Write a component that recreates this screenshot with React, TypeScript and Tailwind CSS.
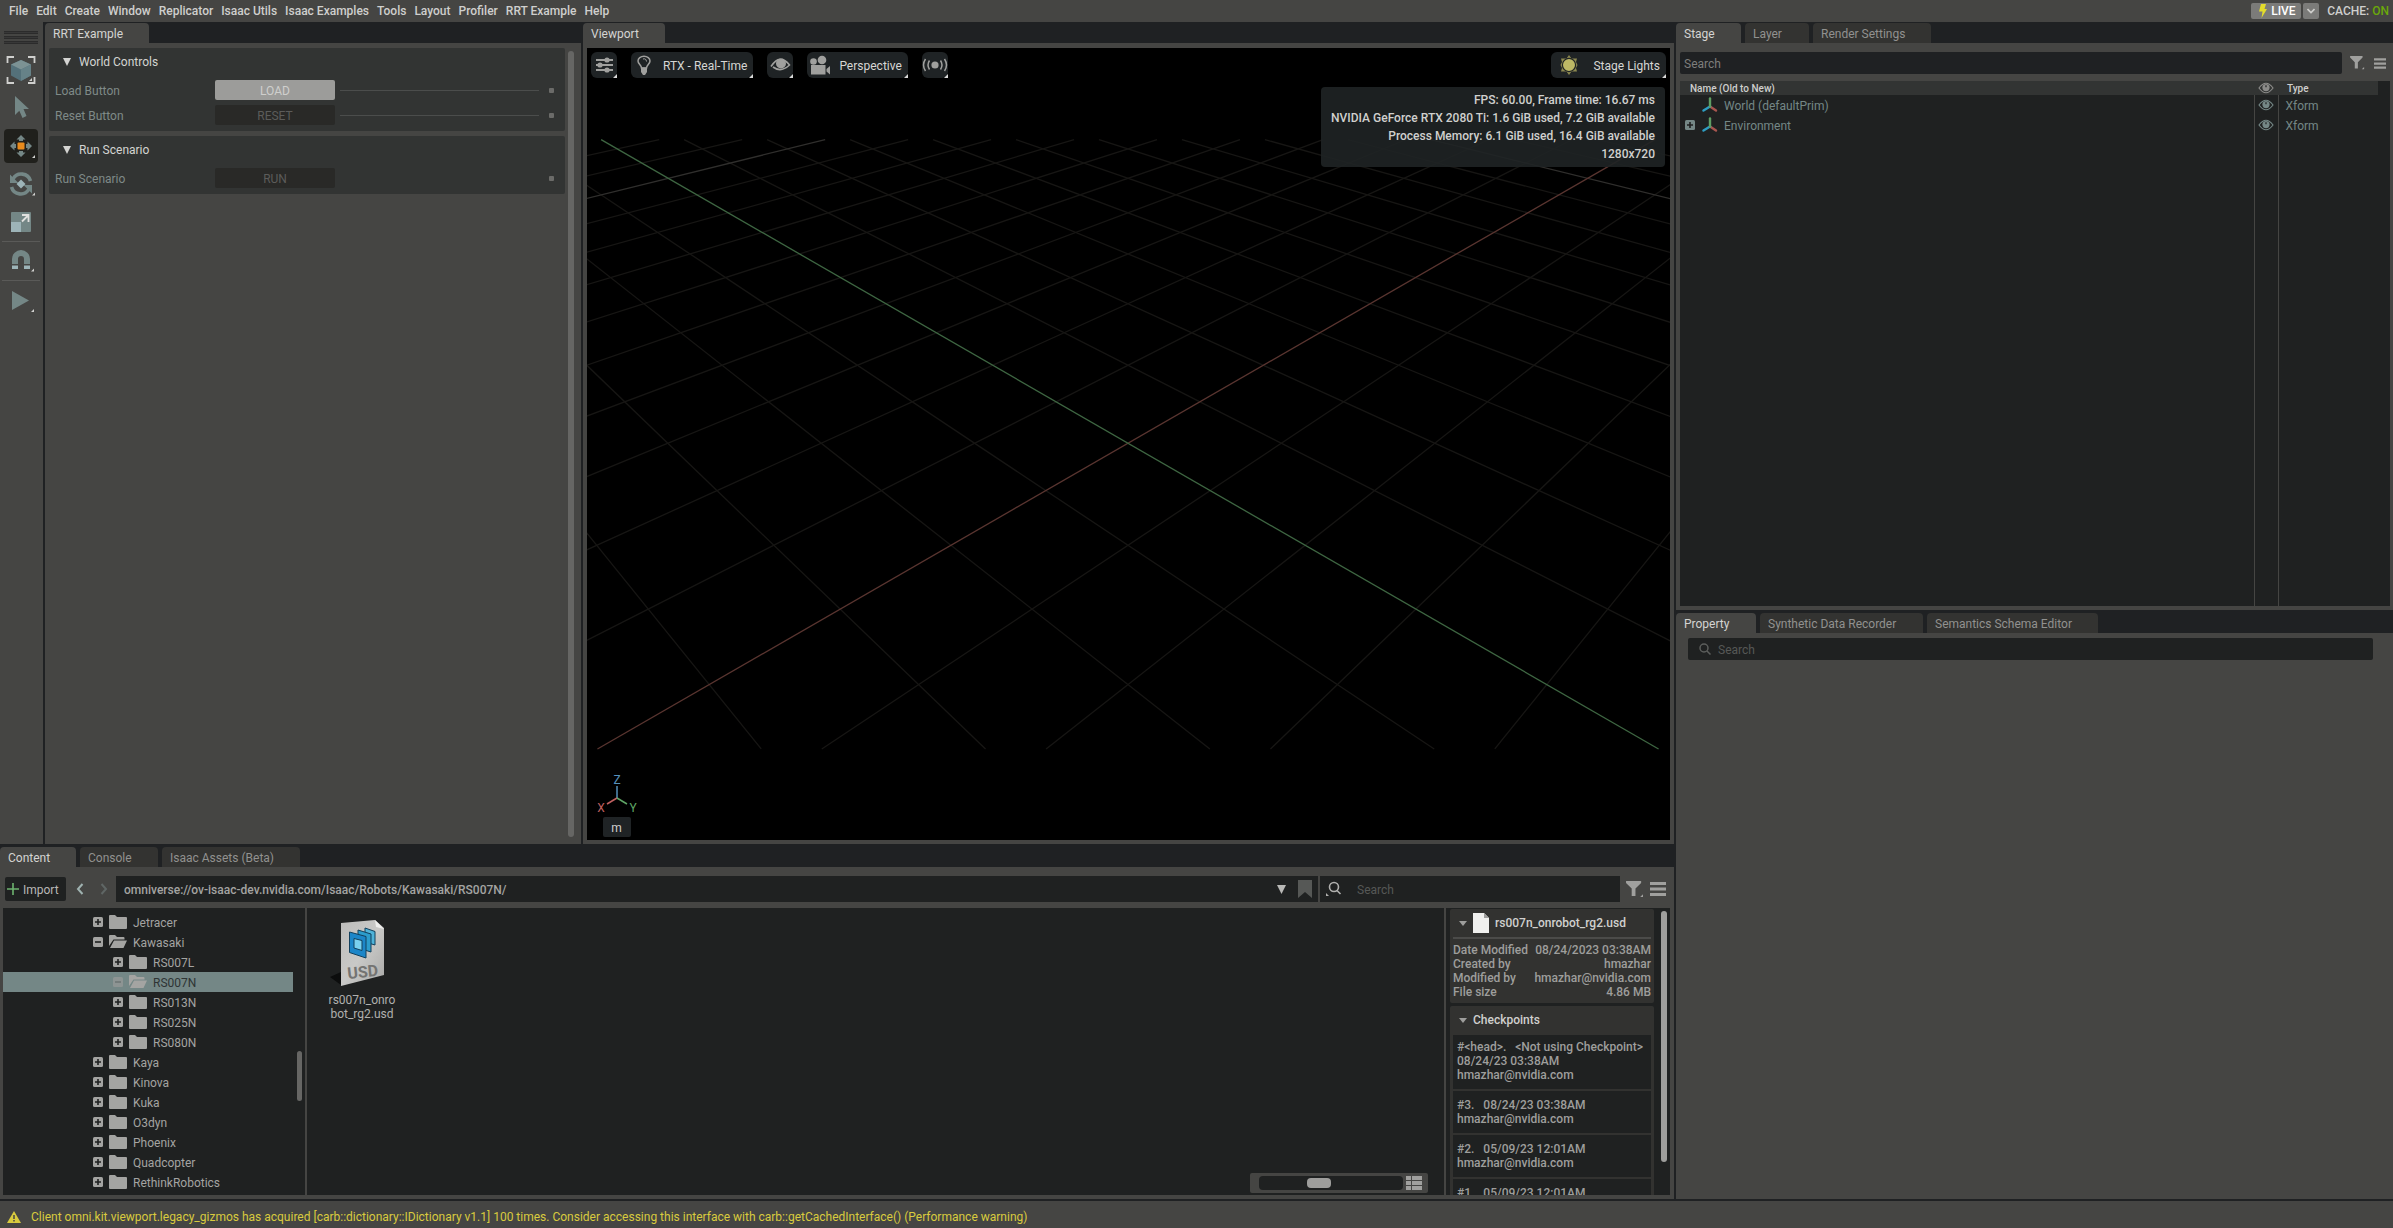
import type { ReactNode } from 'react'

function Caret({ className }: { className: string }) {
  return (
    <svg viewBox="0 0 10 10" preserveAspectRatio="none" className={className} fill="currentColor" aria-hidden="true">
      <path d="M0 0h10L5 10z" />
    </svg>
  )
}

function Corner() {
  return (
    <svg viewBox="0 0 4 4" className="absolute bottom-0 right-0 size-1" fill="#d8d8d8" aria-hidden="true">
      <path d="M4 0v4H0z" />
    </svg>
  )
}

function EyeIcon() {
  return (
    <svg viewBox="0 0 16 12" className="mx-auto h-3 w-4" fill="none" aria-hidden="true">
      <path d="M1 6q7-9.5 14 0q-7 9.5-14 0z" stroke="currentColor" strokeWidth="1.2" />
      <circle cx="8" cy="5.6" r="3.6" fill="currentColor" />
      <path d="M8 5.2V3.2" stroke="#1f2121" strokeWidth="1.2" />
    </svg>
  )
}

function FilterIcon({ className }: { className: string }) {
  return (
    <svg viewBox="0 0 19 18" className={className} fill="#a0a09e" aria-hidden="true">
      <path d="M0 0h16v2l-6 6v8H6V8L0 2z" />
      <path d="M18 14v3h-3z" />
    </svg>
  )
}

function MenuIcon({ className }: { className: string }) {
  return (
    <svg viewBox="0 0 16 14" className={className} fill="#a0a09e" aria-hidden="true">
      <path d="M0 0h16v3H0zM0 5.5h16v3H0zM0 11h16v3H0z" />
    </svg>
  )
}

function ExpandIcon({ open, dim }: { open?: boolean; dim?: boolean }) {
  return (
    <svg viewBox="0 0 10 10" className={dim ? 'size-[10px] shrink-0 text-[#9e9e9c] opacity-60' : 'size-[10px] shrink-0'} aria-hidden="true">
      <rect width="10" height="10" rx="1.5" fill="currentColor" />
      <path d={open ? 'M2 5h6' : 'M2 5h6M5 2v6'} stroke="#1f2121" strokeWidth="1.6" opacity={dim ? 0.4 : 1} />
    </svg>
  )
}

function FolderIcon({ open }: { open?: boolean }) {
  return (
    <svg viewBox="0 0 18 14" className="h-[14px] w-[18px] shrink-0" fill="currentColor" aria-hidden="true">
      {open ? (
        <path d="M0 1q0-1 1-1h5l2 2h6.500q1 0 1 1v1.500H4.500L0 11zM5 5.500h13L14.500 13H1z" />
      ) : (
        <path d="M0 1q0-1 1-1h5l2 2h9q1 0 1 1v10q0 1-1 1H1q-1 0-1-1z" />
      )}
    </svg>
  )
}

function AxesIcon() {
  return (
    <svg viewBox="0 0 16 16" className="size-4 shrink-0" fill="none" strokeWidth="2.4" strokeLinecap="round" aria-hidden="true">
      <path d="M8 9.500l6 4" stroke="#a8554f" />
      <path d="M8 9.500l-6.500 4" stroke="#2e9cc0" />
      <path d="M8 9.500V1.500" stroke="#5f9e63" />
    </svg>
  )
}

type TabsProps = { tabs: { name: string; width: string }[] }

function Tabs({ tabs }: TabsProps) {
  return (
    <div className="flex h-5 shrink-0 gap-1" role="tablist">
      {tabs.map((tab, i) => (
        <button
          key={tab.name}
          role="tab"
          aria-selected={i === 0}
          className={`${tab.width} rounded-t px-2 pt-[2px] text-left ${i === 0 ? 'bg-[#454543] text-[#d4d4d2]' : 'bg-[#333331] text-[#91918f]'}`}
        >
          {tab.name}
        </button>
      ))}
    </div>
  )
}

const menus = ['File', 'Edit', 'Create', 'Window', 'Replicator', 'Isaac Utils', 'Isaac Examples', 'Tools', 'Layout', 'Profiler', 'RRT Example', 'Help']

function MenuBar() {
  return (
    <header className="flex h-[22px] shrink-0 items-center bg-[#454543] pl-[9px] pr-1 font-medium text-[#cfcfcd]">
      <nav className="flex flex-1 gap-2">
        {menus.map((m) => (
          <button key={m}>{m}</button>
        ))}
      </nav>
      <button className="flex h-4 w-[50px] items-center gap-1 rounded-xs bg-[#7b7b79] pl-2 text-white">
        <svg viewBox="0 0 8 14" className="h-[14px] w-2" fill="#e3dc2c" aria-hidden="true">
          <path d="M2 0h5L5.500 5H8L2.500 14l1-6.500H0z" />
        </svg>
        LIVE
      </button>
      <button aria-label="Live options" className="ml-[2px] flex h-4 w-4 items-center justify-center rounded-xs bg-[#7b7b79]">
        <svg viewBox="0 0 8 6" className="h-[6px] w-2" fill="none" stroke="#cfcfcd" strokeWidth="1.6" aria-hidden="true">
          <path d="M.5 1L4 4.500L7.500 1" />
        </svg>
      </button>
      <p className="ml-2">
        CACHE: <span className="text-[#6aa80a]">ON</span>
      </p>
    </header>
  )
}

function ToolButton({ label, active, children }: { label: string; active?: boolean; children: ReactNode }) {
  return (
    <button
      aria-label={label}
      className={`flex h-[34px] w-[34px] items-center justify-center rounded ${active ? 'bg-[#20201c]' : ''}`}
    >
      <svg viewBox="0 0 34 34" className="size-[34px]" fill="#748786" aria-hidden="true">
        {children}
      </svg>
    </button>
  )
}

function Toolbar() {
  return (
    <aside className="flex w-[43px] shrink-0 flex-col items-center bg-[#454543] pr-px pt-[9px]">
      <div className="mb-[9px] flex w-[34px] flex-col gap-[2px]">
        <div className="h-[3px] border-y border-[#2b2b2b] bg-[#383838]" />
        <div className="h-[3px] border-y border-[#2b2b2b] bg-[#383838]" />
        <div className="h-[3px] border-y border-[#2b2b2b] bg-[#383838]" />
      </div>
      <div className="flex flex-col gap-1">
        <ToolButton label="Select mode">
          <path d="M3.500 10V4H10M24 4h6.500v6M3.500 24v6H10M30.500 24v6H24" fill="none" stroke="#d0d0ce" strokeWidth="1.800" />
          <path d="M17 7l10 4.500v11L17 28L7 22.500v-11z" fill="#54717a" />
          <path d="M17 7l10 4.500L17 16.500L7 11.500z" fill="#7c9294" />
          <path d="M17 16.500l10-5v11L17 28z" fill="#668288" />
          <path d="M28 25v3h-3z" fill="#d0d0ce" />
        </ToolButton>
        <ToolButton label="Select">
          <path d="M11 5l14 13h-5.500l3 7-4 2-3.200-7.200L11 24z" />
        </ToolButton>
        <ToolButton label="Move" active>
          <rect x="13.500" y="13.500" width="7" height="7" rx="1" fill="#e98b1c" />
          <path d="M17 6l4.500 4.500H19V12h-4v-1.500h-2.500zM17 28l4.500-4.500H19V22h-4v1.500h-2.500zM6 17l4.500-4.500V15H12v4h-1.500v2.500zM28 17l-4.500-4.500V15H22v4h1.500v2.500z" />
          <path d="M31 26v3h-3z" fill="#d0d0ce" />
        </ToolButton>
        <ToolButton label="Rotate">
          <path d="M9 12A9.500 9.500 0 0 1 26.500 14" fill="none" stroke="#748786" strokeWidth="3.600" />
          <path d="M25 22A9.500 9.500 0 0 1 7.500 20" fill="none" stroke="#748786" strokeWidth="3.600" />
          <path d="M6 7.500v8.500h8.500zM28 26.500v-8.500h-8.500z" />
          <path d="M17 12.500l4.500 4.500-4.500 4.500-4.500-4.500z" fill="#9db4b8" />
          <path d="M31 25.500v3h-3z" fill="#d0d0ce" />
        </ToolButton>
        <ToolButton label="Scale">
          <rect x="7" y="7" width="20" height="20" rx="1" />
          <rect x="7" y="17" width="10" height="10" fill="#9db4b8" />
          <path d="M18 10h6.500v7M24.500 10L18 16.500" fill="none" stroke="#e0e0de" strokeWidth="1.800" />
        </ToolButton>
      </div>
      <hr className="my-[2px] w-[38px] border-[#5a5a58]" />
      <ToolButton label="Snap">
        <path d="M11 20V15a6 6 0 0 1 12 0v5" fill="none" stroke="#748786" strokeWidth="6" />
        <path d="M8 21.500h6V25H8zM20 21.500h6V25h-6z" fill="#9db4b8" />
        <path d="M30 24.500v3h-3z" fill="#d0d0ce" />
      </ToolButton>
      <hr className="my-[2px] w-[38px] border-[#5a5a58]" />
      <ToolButton label="Play">
        <path d="M8 8l17 9.500L8 27z" />
        <path d="M30 26v3h-3z" fill="#d0d0ce" />
      </ToolButton>
    </aside>
  )
}

function ControlRow({ label, action, enabled, line }: { label: string; action: string; enabled?: boolean; line?: boolean }) {
  return (
    <div className="flex h-5 items-center">
      <span className="w-40 shrink-0 pt-[2px] text-[#7f8a88]">{label}</span>
      <button className={`h-5 w-[120px] shrink-0 rounded-xs pt-[2px] ${enabled ? 'bg-[#9c9c9a] text-[#cfcfcd]' : 'bg-[#292927] text-[#5c5c5a]'}`}>{action}</button>
      <div className={`mx-[5px] h-px flex-1 ${line ? 'bg-[#4b4d4c]' : ''}`} />
      <span className="mx-[5px] size-[5px] rounded-[1px] bg-[#6b6b69]" />
    </div>
  )
}

function Section({ title, children }: { title: string; children: ReactNode }) {
  return (
    <section className="rounded-xs bg-[#323433] px-[6px] pb-[6px]">
      <h2 className="mb-[4px] flex h-7 items-center gap-2 pl-2 text-[#d4d4d2]">
        <Caret className="h-2 w-2" />
        {title}
      </h2>
      <div className="flex flex-col gap-[5px]">{children}</div>
    </section>
  )
}

function ExamplePanel() {
  return (
    <div className="flex w-[536px] shrink-0 flex-col pt-px">
      <Tabs tabs={[{ name: 'RRT Example', width: 'w-[104px]' }]} />
      <div className="flex flex-1 gap-[3px] bg-[#454543] px-1 py-[5px]">
        <div className="flex flex-1 flex-col gap-[5px]">
          <Section title="World Controls">
            <ControlRow label="Load Button" action="LOAD" enabled line />
            <ControlRow label="Reset Button" action="RESET" line />
          </Section>
          <Section title="Run Scenario">
            <ControlRow label="Run Scenario" action="RUN" />
          </Section>
        </div>
        <div className="mb-[2px] mr-[3px] mt-[3px] w-[6px] rounded-full bg-[#666664]" />
      </div>
    </div>
  )
}

// ground plane projection: depth d runs from NEAR (bottom) to FAR (top)
const CX = 541
const HORIZON = -266
const DEPTH = 9892
const SPREAD = 1147.5
const ORIGIN = 14.96
const NEAR = 10.23
const FAR = 27.66

function gridLine(n: number, side: number) {
  const x = (d: number) => CX + (side * SPREAD * (2 * n + ORIGIN - d)) / d
  const y = (d: number) => HORIZON + DEPTH / d
  return { x1: x(NEAR), y1: y(NEAR), x2: x(FAR), y2: y(FAR) }
}

function Grid() {
  const lines = Array.from({ length: 40 }, (_, i) => i - 14).filter((n) => n !== 0)
  return (
    <svg viewBox="0 0 1083 792" preserveAspectRatio="xMidYMid slice" className="absolute inset-0 size-full" aria-hidden="true">
      {lines.map((n) => (
        <g key={n} stroke={n % 10 === 0 ? '#302f2d' : '#171614'} strokeWidth="1.3">
          <line {...gridLine(n, 1)} />
          <line {...gridLine(n, -1)} />
        </g>
      ))}
      <line {...gridLine(0, -1)} stroke="#5a3530" strokeWidth="1.3" />
      <line {...gridLine(0, 1)} stroke="#3e6642" strokeWidth="1.3" />
    </svg>
  )
}

function ViewButton({ label, text, wide, children }: { label: string; text?: string; wide?: boolean; children: ReactNode }) {
  return (
    <button aria-label={label} className={`relative flex h-[26px] items-center rounded-md bg-[#1f2325] text-[#d6d6d4] ${wide ? 'gap-[11px] pl-[5px]' : 'gap-[6px]'}`}>
      <svg viewBox="0 0 26 26" className="size-[26px]" fill="#a0a09e" aria-hidden="true">
        {children}
      </svg>
      {text && <span className="pr-[6px] pt-[2px]">{text}</span>}
      <Corner />
    </button>
  )
}

function Viewport() {
  return (
    <div className="flex min-w-0 flex-1 flex-col pt-px">
      <Tabs tabs={[{ name: 'Viewport', width: 'w-[82px]' }]} />
      <div className="flex flex-1 bg-[#454543] px-1 pb-1 pt-[5px]">
        <div className="relative flex flex-1 flex-col justify-between overflow-hidden bg-black">
          <Grid />
          <div className="relative flex gap-[14px] px-1 pt-1">
            <ViewButton label="Viewport settings">
              <path d="M5 8h17M5 13h17M5 18h17" stroke="#a0a09e" strokeWidth="2" />
              <circle cx="16" cy="8" r="2.600" />
              <circle cx="9" cy="13" r="2.600" />
              <circle cx="16" cy="18" r="2.600" />
            </ViewButton>
            <ViewButton label="Renderer" text="RTX - Real-Time">
              <path d="M10.500 16c0-3-3.500-4-3.500-7a6 4.800 0 0 1 12 0c0 3-3.500 4-3.500 7z" fill="none" stroke="#a0a09e" strokeWidth="1.500" />
              <path d="M10 15.500h6V20l-2 3h-2l-2-3z" />
              <path d="M12 7q3-1 3.500 2.500" fill="none" stroke="#a0a09e" />
            </ViewButton>
            <ViewButton label="Visibility">
              <path d="M4 14.500Q13 1 22.500 13Q14 21 6 15" fill="none" stroke="#a0a09e" strokeWidth="1.600" />
              <circle cx="14" cy="11.500" r="5" />
            </ViewButton>
            <ViewButton label="Camera" text="Perspective">
              <circle cx="6.500" cy="9.500" r="3.300" />
              <circle cx="15" cy="8" r="4.300" />
              <path d="M4 13h14.500v9.500H4zM19.500 17l3.500-3v8.500l-3.500-3z" />
            </ViewButton>
            <ViewButton label="Sensors">
              <circle cx="13" cy="13" r="3.600" />
              <path d="M7.500 8.500q-3 4.500 0 9M18.500 8.500q3 4.500 0 9M3.500 7q-4 6 0 12M22.500 7q4 6 0 12" fill="none" stroke="#a0a09e" strokeWidth="1.500" />
            </ViewButton>
            <div className="ml-auto">
              <ViewButton label="Lighting" text="Stage Lights" wide>
                <path d="M13 3l2.500 3.500H21l-1 3.500 1.500 3-1.500 3 1 3.500h-5.500L13 23l-2.500-3.500H5L6 16l-1.500-3L6 10 5 6.500h5.500z" fill="#8c8850" />
                <circle cx="13" cy="13" r="6.600" fill="#bdb865" stroke="#1f2325" strokeWidth="1.200" />
              </ViewButton>
            </div>
          </div>
          <div className="absolute right-[5px] top-[39px] rounded bg-[#1f2325]/90 px-[10px] py-1 text-right font-medium leading-[18px] text-[#d0d0ce]">
            <p>FPS: 60.00, Frame time: 16.67 ms</p>
            <p>NVIDIA GeForce RTX 2080 Ti: 1.6 GiB used, 7.2 GiB available</p>
            <p>Process Memory: 6.1 GiB used, 16.4 GiB available</p>
            <p>1280x720</p>
          </div>
          <div className="relative flex w-[59px] flex-col items-center pb-[3px]">
            <svg viewBox="0 0 46 46" className="size-[46px]" fontSize="12" textAnchor="middle" fill="none" strokeWidth="1.500" aria-hidden="true">
              <path d="M23 27V15" stroke="#5590bb" />
              <path d="M23 27l-10 6" stroke="#c06060" />
              <path d="M23 27l10 6" stroke="#5fa565" />
              <text x="23" y="13" fill="#5590bb">Z</text>
              <text x="7" y="41" fill="#c06060">X</text>
              <text x="39" y="41" fill="#5fa565">Y</text>
            </svg>
            <button className="h-5 w-7 rounded-xs bg-[#1f2325] pt-[2px] text-[#d0d0ce]">m</button>
          </div>
        </div>
      </div>
    </div>
  )
}

type Node = { name: string; depth?: boolean; open?: boolean; selected?: boolean }

const tree: Node[] = [
  { name: 'Jetracer' },
  { name: 'Kawasaki', open: true },
  { name: 'RS007L', depth: true },
  { name: 'RS007N', depth: true, open: true, selected: true },
  { name: 'RS013N', depth: true },
  { name: 'RS025N', depth: true },
  { name: 'RS080N', depth: true },
  { name: 'Kaya' },
  { name: 'Kinova' },
  { name: 'Kuka' },
  { name: 'O3dyn' },
  { name: 'Phoenix' },
  { name: 'Quadcopter' },
  { name: 'RethinkRobotics' },
  { name: '' },
]

function Tree() {
  return (
    <div className="relative w-[302px] shrink-0 overflow-hidden bg-[#1f2121] pt-1">
      <ul className="mr-3">
        {tree.map((n) => (
          <li
            key={n.name}
            className={`flex h-5 items-center gap-[6px] text-[#a4a4a2] ${n.depth ? 'pl-[110px]' : 'pl-[90px]'} ${n.selected ? 'bg-[#748786]' : ''}`}
          >
            <ExpandIcon open={n.open} dim={n.selected} />
            <FolderIcon open={n.open} />
            <span className={`pt-[2px] ${n.selected ? 'text-[#2e3434]' : ''}`}>{n.name}</span>
          </li>
        ))}
      </ul>
      <div className="absolute right-[3px] top-[143px] h-[50px] w-[5px] rounded-full bg-[#666664]" />
    </div>
  )
}

function UsdIcon() {
  return (
    <svg viewBox="0 0 68 68" className="size-[68px]" aria-hidden="true">
      <defs>
        <linearGradient id="paper" x1="0" y1="0" x2="1" y2="1">
          <stop offset="0" stopColor="#bdbdbb" />
          <stop offset="0.5" stopColor="#c9c9c7" />
          <stop offset="1" stopColor="#a9a9a7" />
        </linearGradient>
      </defs>
      <path d="M2 59l11-5v13z" fill="#0c0d0d" />
      <path d="M13 5l34-3 9 8v47l-43 11z" fill="url(#paper)" />
      <path d="M47 2l9 9-8-2z" fill="#efefed" />
      <g stroke="#12405c" strokeWidth="1">
        <path d="M37 10l10 3.500V27l-10-3z" fill="#4fb3d9" />
        <path d="M30 12l13 4v18l-13-4z" fill="#2b9ccc" />
        <path d="M21.500 14l16.500 4.500V40L21.500 34.500z" fill="#1c86c8" />
        <path d="M26 20.500l8 2v10l-8-2.500z" fill="#79d0ee" />
      </g>
      <text x="20" y="61" fontSize="16" fontWeight="700" fill="#747472" transform="rotate(-6 20 61)">USD</text>
    </svg>
  )
}

const checkpoints = [
  ['#<head>.   <Not using Checkpoint>', '08/24/23 03:38AM', 'hmazhar@nvidia.com'],
  ['#3.   08/24/23 03:38AM', 'hmazhar@nvidia.com'],
  ['#2.   05/09/23 12:01AM', 'hmazhar@nvidia.com'],
  ['#1.   05/09/23 12:01AM', 'hmazhar@nvidia.com'],
]

const fileInfo = [
  ['Date Modified', '08/24/2023 03:38AM'],
  ['Created by', 'hmazhar'],
  ['Modified by', 'hmazhar@nvidia.com'],
  ['File size', '4.86 MB'],
]

function Details() {
  return (
    <div className="flex w-[224px] shrink-0 justify-between overflow-hidden bg-[#1f2121] pl-1 pr-[3px] pt-px">
      <div className="flex w-[204px] flex-col gap-[3px] font-medium text-[#9e9e9c]">
        <section className="h-[94px] shrink-0 rounded-xs bg-[#323230] px-[3px]">
          <h3 className="flex h-[30px] items-center gap-[6px] border-b-2 border-[#4b4b49] pl-[6px] text-[#d0d0ce]">
            <Caret className="h-[5px] w-2 text-[#9e9e9c]" />
            <svg viewBox="0 0 16 20" className="h-5 w-4" aria-hidden="true">
              <path d="M0 0h11l5 5v15H0z" fill="#f0f0ee" />
              <path d="M11 0l5 5h-5z" fill="#9e9e9c" />
            </svg>
            rs007n_onrobot_rg2.usd
          </h3>
          <dl className="pt-1">
            {fileInfo.map(([k, v]) => (
              <div key={k} className="flex justify-between leading-[14px]">
                <dt>{k}</dt>
                <dd>{v}</dd>
              </div>
            ))}
          </dl>
        </section>
        <section className="shrink-0 rounded-xs bg-[#323230] px-[3px]">
          <h3 className="mb-px flex h-7 items-center gap-[6px] pl-[6px] text-[#d0d0ce]">
            <Caret className="h-[5px] w-2 text-[#9e9e9c]" />
            Checkpoints
          </h3>
          <ul className="flex flex-col gap-[2px]">
            {checkpoints.map((c) => (
              <li key={c[0]} className="bg-[#1f2121] px-1 py-[7px] leading-[14px] first:pt-[5px]">
                {c.map((line) => (
                  <p key={line} className="whitespace-pre">{line}</p>
                ))}
              </li>
            ))}
          </ul>
        </section>
      </div>
      <div className="mb-[33px] mt-[2px] w-[6px] rounded-full bg-[#9e9e9c]" />
    </div>
  )
}

function ContentPanel() {
  return (
    <div className="flex h-[355px] shrink-0 flex-col pt-[3px]">
      <Tabs
        tabs={[
          { name: 'Content', width: 'w-[76px]' },
          { name: 'Console', width: 'w-[78px]' },
          { name: 'Isaac Assets (Beta)', width: 'w-[138px]' },
        ]}
      />
      <div className="flex min-h-0 flex-1 flex-col bg-[#454543] pb-1 pl-[3px] pr-1">
        <div className="my-[6px] flex h-[29px] items-center pt-[3px]">
          <button className="ml-[2px] flex h-6 w-[61px] items-center gap-1 rounded-xs bg-[#1f2121] pl-[2px] text-[#b8b8b6]">
            <svg viewBox="0 0 12 12" className="size-3" stroke="#6db36f" strokeWidth="1.600" aria-hidden="true">
              <path d="M6 0v12M0 6h12" />
            </svg>
            <span className="pt-[2px]">Import</span>
          </button>
          <button aria-label="Back" className="ml-[10px] w-2">
            <svg viewBox="0 0 8 12" className="h-3 w-2" fill="none" stroke="#9fb2b0" strokeWidth="2" aria-hidden="true">
              <path d="M6.500 1L2 6l4.500 5" />
            </svg>
          </button>
          <button aria-label="Forward" className="ml-4 w-2">
            <svg viewBox="0 0 8 12" className="h-3 w-2" fill="none" stroke="#5f6665" strokeWidth="2" aria-hidden="true">
              <path d="M1.500 1L6 6l-4.500 5" />
            </svg>
          </button>
          <div className="ml-2 flex h-[26px] flex-1 items-center bg-[#1f2121] pr-[6px] text-[#a4a4a2]">
            <input
              aria-label="Path"
              defaultValue="omniverse://ov-isaac-dev.nvidia.com/Isaac/Robots/Kawasaki/RS007N/"
              className="min-w-0 flex-1 bg-transparent pl-2 pt-[2px] font-medium"
            />
            <Caret className="size-[9px] text-[#b8b8b6]" />
            <svg viewBox="0 0 14 18" className="ml-3 h-[18px] w-[14px]" fill="#565856" aria-hidden="true">
              <path d="M0 0h14v18l-7-6-7 6z" />
            </svg>
          </div>
          <div className="ml-[2px] flex h-[26px] w-[300px] items-center bg-[#1f2121] pl-[6px]">
            <svg viewBox="0 0 16 16" className="size-4" fill="none" stroke="#b0b0ae" strokeWidth="1.600" aria-hidden="true">
              <circle cx="8" cy="6" r="4.500" />
              <path d="M11 9.500l3.500 3.500" />
              <path d="M0 12v3h3z" fill="#b0b0ae" stroke="none" />
            </svg>
            <input aria-label="Search content" placeholder="Search" className="ml-[15px] min-w-0 flex-1 bg-transparent pt-[2px] placeholder:text-[#565856]" />
          </div>
          <button aria-label="Filter" className="ml-[6px]">
            <FilterIcon className="h-[17px] w-[18px]" />
          </button>
          <button aria-label="Options" className="ml-[6px] mr-1">
            <MenuIcon className="h-[14px] w-4" />
          </button>
        </div>
        <div className="flex min-h-0 flex-1 gap-[2px]">
          <Tree />
          <div className="relative flex-1 bg-[#1f2121]">
            <figure className="ml-[21px] mt-[10px] flex w-[68px] flex-col items-center text-center text-[#b0b0ae]">
              <UsdIcon />
              <figcaption className="pt-[7px] leading-[14px]">
                rs007n_onro
                <br />
                bot_rg2.usd
              </figcaption>
            </figure>
            <div className="absolute bottom-[2px] right-4 flex h-5 w-[178px] items-center gap-[3px] rounded-xs bg-[#454543] pl-[9px]">
              <input
                type="range"
                aria-label="Thumbnail size"
                defaultValue={40}
                className="h-[14px] w-36 appearance-none rounded bg-[#1f2121] [&::-webkit-slider-thumb]:h-[10px] [&::-webkit-slider-thumb]:w-6 [&::-webkit-slider-thumb]:appearance-none [&::-webkit-slider-thumb]:rounded [&::-webkit-slider-thumb]:bg-[#9e9e9c]"
              />
              <button aria-label="List view">
                <svg viewBox="0 0 16 14" className="h-[14px] w-4" fill="#a0a09e" aria-hidden="true">
                  <path d="M0 0h5v4H0zM6 0h10v4H6zM0 5h5v4H0zM6 5h10v4H6zM0 10h5v4H0zM6 10h10v4H6z" />
                </svg>
              </button>
            </div>
          </div>
          <Details />
        </div>
      </div>
    </div>
  )
}

function StagePanel() {
  return (
    <div className="flex flex-1 flex-col">
      <Tabs
        tabs={[
          { name: 'Stage', width: 'w-[65px]' },
          { name: 'Layer', width: 'w-[64px]' },
          { name: 'Render Settings', width: 'w-[118px]' },
        ]}
      />
      <div className="flex flex-1 flex-col bg-[#454543] pb-1 pl-1 pr-[3px] pt-[9px]">
        <div className="flex items-center">
          <input aria-label="Search stage" placeholder="Search" className="h-[22px] min-w-0 flex-1 rounded-xs bg-[#1f2123] pl-1 pt-[2px] placeholder:text-[#7e7e7c]" />
          <button aria-label="Filter stage" className="ml-2">
            <FilterIcon className="h-[14px] w-[15px]" />
          </button>
          <button aria-label="Stage options" className="ml-[9px] mr-1">
            <MenuIcon className="h-[11px] w-3" />
          </button>
        </div>
        <div className="mt-[7px] flex flex-1 bg-[#1f2121] pr-3">
          <table className="h-full w-full table-fixed border-collapse text-left text-[#748786]">
            <thead>
              <tr className="h-[14px] bg-[#323433] text-[10px] leading-[12px] text-[#cfcfcd]">
                <th className="pl-[10px] pt-[2px] font-medium">Name (Old to New)</th>
                <th className="w-6 text-[#8b8b89]" aria-label="Visibility"><EyeIcon /></th>
                <th className="w-[100px] pl-[9px] pt-[2px] font-medium">Type</th>
              </tr>
            </thead>
            <tbody>
              {['World (defaultPrim)', 'Environment'].map((name, i) => (
                <tr key={name} className="h-5">
                  <td>
                    <div className="flex h-5 items-center pl-[5px]">
                      <span className="w-[17px]">{i === 1 && <ExpandIcon />}</span>
                      <AxesIcon />
                      <span className="pl-[6px] pt-[2px]">{name}</span>
                    </div>
                  </td>
                  <td className="border-x border-[#454543]"><EyeIcon /></td>
                  <td className="pl-[7px] pt-[2px]">Xform</td>
                </tr>
              ))}
              <tr className="h-full">
                <td />
                <td className="border-x border-[#454543]" />
                <td />
              </tr>
            </tbody>
          </table>
        </div>
      </div>
    </div>
  )
}

function PropertyPanel() {
  return (
    <div className="flex flex-1 flex-col">
      <Tabs
        tabs={[
          { name: 'Property', width: 'w-[80px]' },
          { name: 'Synthetic Data Recorder', width: 'w-[163px]' },
          { name: 'Semantics Schema Editor', width: 'w-[171px]' },
        ]}
      />
      <div className="flex-1 bg-[#454543] pl-3 pr-5 pt-[5px]">
        <label className="flex h-[22px] items-center gap-[7px] rounded-xs bg-[#1f2121] pl-[11px]">
          <svg viewBox="0 0 12 12" className="size-3" fill="none" stroke="#5c5e5c" strokeWidth="1.500" aria-hidden="true">
            <circle cx="5" cy="5" r="4" />
            <path d="M8 8l3.500 3.500" />
          </svg>
          <input aria-label="Search properties" placeholder="Search" className="min-w-0 flex-1 bg-transparent pt-[2px] placeholder:text-[#565856]" />
        </label>
      </div>
    </div>
  )
}

export default function App() {
  return (
    <div className="flex h-screen flex-col bg-[#1f2123] font-['Roboto',sans-serif] text-xs">
      <MenuBar />
      <main className="flex min-h-0 flex-1 gap-[2px]">
        <div className="flex min-w-0 flex-1 flex-col">
          <div className="flex min-h-0 flex-1 gap-[2px]">
            <Toolbar />
            <ExamplePanel />
            <Viewport />
          </div>
          <ContentPanel />
        </div>
        <div className="flex w-[717px] shrink-0 flex-col gap-[3px] pt-px">
          <StagePanel />
          <PropertyPanel />
        </div>
      </main>
      <footer className="mt-[2px] flex h-[27px] shrink-0 items-center gap-[10px] bg-[#454543] pl-[7px] pt-1 text-[#d9cb3e]">
        <svg viewBox="0 0 14 12" className="h-3 w-[14px]" aria-hidden="true">
          <path d="M7 0l7 12H0z" fill="#d9cb3e" />
          <path d="M7 4v4M7 9v1.500" stroke="#454543" strokeWidth="1.500" />
        </svg>
        Client omni.kit.viewport.legacy_gizmos has acquired [carb::dictionary::IDictionary v1.1] 100 times. Consider accessing this interface with carb::getCachedInterface() (Performance warning)
      </footer>
    </div>
  )
}
